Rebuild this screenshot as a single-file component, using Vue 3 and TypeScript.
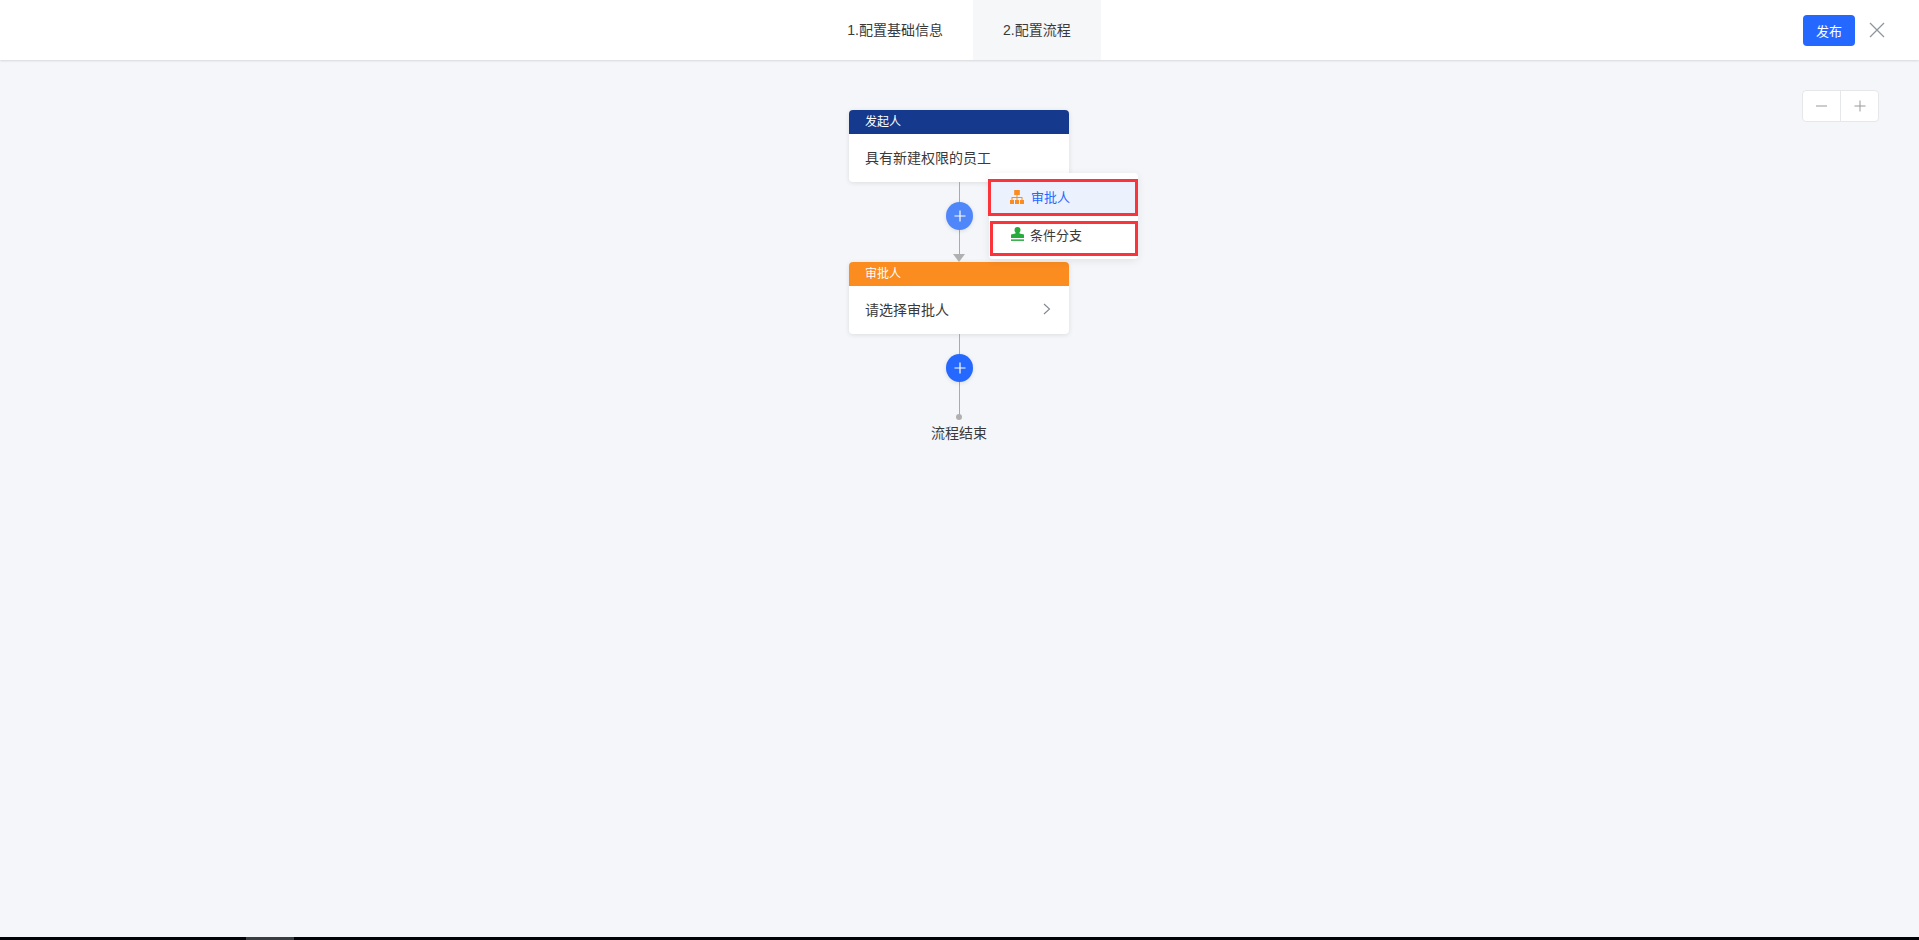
<script setup lang="ts">
const tabs = [
  { label: '1.配置基础信息', active: false },
  { label: '2.配置流程', active: true },
]
</script>

<template>
  <div class="page">
    <header class="header">
      <div></div>
      <nav class="tabs">
        <div v-for="t in tabs" :key="t.label" class="tab" :class="{ active: t.active }">{{ t.label }}</div>
      </nav>
      <div class="actions">
        <button class="publish">发布</button>
        <svg class="close" width="16" height="16" viewBox="0 0 16 16">
          <path d="M1 1 L15 15 M15 1 L1 15" stroke="#8f959e" stroke-width="1.3" fill="none" />
        </svg>
      </div>
    </header>

    <main class="canvas">
      <div class="zoom">
        <div class="zoom-btn">
          <svg width="12" height="12" viewBox="0 0 12 12"><path d="M0 6 H11" stroke="#999" stroke-width="1" /></svg>
        </div>
        <div class="zoom-btn">
          <svg width="12" height="12" viewBox="0 0 12 12"><path d="M0.5 6 H11.5 M6 0.5 V11.5" stroke="#999" stroke-width="1" /></svg>
        </div>
      </div>

      <div class="flow">
        <section class="card">
          <div class="card-title navy">发起人</div>
          <div class="card-body">具有新建权限的员工</div>
        </section>

        <div class="connector arrowed">
          <button class="add hover">
            <svg width="12" height="12" viewBox="0 0 12 12"><path d="M0.5 6 H11.5 M6 0.5 V11.5" stroke="#fff" stroke-width="1.2" /></svg>
          </button>
          <div class="menu">
            <div class="menu-item first">
              <svg width="14" height="14" viewBox="0 0 14 14" fill="#fa8c20">
                <rect x="4.2" y="0" width="5.6" height="5" />
                <rect x="0" y="10" width="4" height="4" />
                <rect x="5" y="10" width="4" height="4" />
                <rect x="10" y="10" width="4" height="4" />
                <path d="M6.5 5 H7.5 V7 H12.5 V10 H11.5 V8 H7.5 V10 H6.5 V8 H2.5 V10 H1.5 V7 H6.5 Z" />
              </svg>
              <span>审批人</span>
            </div>
            <div class="menu-item second">
              <svg width="13" height="14" viewBox="0 0 13 14" fill="#27ab3c">
                <circle cx="6.5" cy="3" r="3" />
                <path d="M4.8 5 H8.2 L8.6 6.6 L13 7.6 V11 H0 V7.6 L4.4 6.6 Z" />
                <rect x="0" y="12.4" width="13" height="1.5" />
              </svg>
              <span>条件分支</span>
            </div>
          </div>
        </div>

        <section class="card">
          <div class="card-title orange">审批人</div>
          <div class="card-body">
            <span>请选择审批人</span>
            <svg width="8" height="12" viewBox="0 0 8 12"><path d="M1 1 L6.5 6 L1 11" stroke="#808890" stroke-width="1.1" fill="none" /></svg>
          </div>
        </section>

        <div class="connector end">
          <button class="add">
            <svg width="12" height="12" viewBox="0 0 12 12"><path d="M0.5 6 H11.5 M6 0.5 V11.5" stroke="#fff" stroke-width="1.2" /></svg>
          </button>
          <span class="dot"></span>
        </div>
        <div class="end-label">流程结束</div>
      </div>
    </main>

    <footer class="strip"><span class="strip-tab"></span></footer>
  </div>
</template>

<style>
html, body { margin: 0; padding: 0; }
</style>

<style scoped>
.page {
  height: 940px;
  display: flex;
  flex-direction: column;
  background: #f5f6fa;
  font-family: "Liberation Sans", "Noto Sans CJK SC", sans-serif;
  font-size: 14px;
  color: #3a3a3a;
  overflow: hidden;
}
.header {
  flex: none;
  height: 60px;
  display: grid;
  grid-template-columns: 1fr auto 1fr;
  padding-right: 1px;
  background: #fff;
  box-shadow: 0 1px 2px rgba(0, 0, 0, 0.12);
  position: relative;
  z-index: 2;
}
.tabs { display: flex; }
.tab {
  padding: 0 30px;
  line-height: 60px;
}
.tab.active { background: #f6f7f9; }
.actions {
  display: flex;
  align-items: center;
  justify-content: flex-end;
  gap: 14px;
  padding-right: 33px;
}
.publish {
  width: 52px;
  height: 31px;
  border: 0;
  border-radius: 4px;
  background: #2468ff;
  color: #fff;
  font: inherit;
  font-size: 13px;
  padding: 0;
}
.canvas {
  flex: 1;
  min-height: 0;
  position: relative;
  padding: 50px 1px 0 0;
}
.zoom {
  position: absolute;
  top: 30px;
  right: 40px;
  display: flex;
  width: 77px;
  height: 32px;
  box-sizing: border-box;
  background: #fff;
  border: 1px solid #e6e7ea;
  border-radius: 4px;
}
.zoom-btn {
  flex: 1;
  display: flex;
  align-items: center;
  justify-content: center;
}
.zoom-btn + .zoom-btn { border-left: 1px solid #e6e7ea; }
.flow {
  width: 220px;
  margin: 0 auto;
  display: flex;
  flex-direction: column;
  align-items: center;
}
.card {
  width: 220px;
  background: #fff;
  border-radius: 4px;
  box-shadow: 0 1px 5px rgba(0, 0, 0, 0.1);
  overflow: hidden;
}
.card-title {
  height: 24px;
  line-height: 25px;
  padding-left: 16px;
  color: #fff;
  font-size: 12px;
}
.navy { background: #15398c; }
.orange { background: #fa8c20; }
.card-body {
  height: 48px;
  box-sizing: border-box;
  display: flex;
  align-items: center;
  justify-content: space-between;
  padding: 0 18px 2px 16px;
}
.connector {
  position: relative;
  width: 100%;
  height: 80px;
  display: flex;
  justify-content: center;
  padding: 20px 0 0 1px;
  box-sizing: border-box;
}
.connector::before {
  content: "";
  position: absolute;
  left: 110px;
  top: 0;
  bottom: 8px;
  width: 1px;
  background: #aaa;
}
.arrowed::after {
  content: "";
  position: absolute;
  left: 104px;
  bottom: 0;
  border-left: 6px solid transparent;
  border-right: 6px solid transparent;
  border-top: 8px solid #b0b0b0;
}
.end { height: 86px; }
.end::before { bottom: 3px; }
.add {
  position: relative;
  width: 27px;
  height: 28px;
  padding: 0;
  border: 0;
  border-radius: 50%;
  background: #2468ff;
  display: flex;
  align-items: center;
  justify-content: center;
  box-shadow: 0 1px 4px rgba(0, 0, 0, 0.12);
}
.add.hover { background: #4f86f9; }
.dot {
  position: absolute;
  left: 107px;
  bottom: 0;
  width: 6px;
  height: 6px;
  border-radius: 50%;
  background: #b0b0b0;
}
.end-label {
  margin-top: 3px;
  line-height: 20px;
}
.menu {
  position: absolute;
  left: 140px;
  top: -9px;
  width: 149px;
  height: 86px;
  box-sizing: border-box;
  background: #fff;
  border-radius: 4px;
  box-shadow: 0 2px 8px rgba(0, 0, 0, 0.08);
  font-size: 13px;
  z-index: 3;
}
.menu-item {
  position: absolute;
  box-sizing: border-box;
  border: 3px solid #fa343a;
  display: flex;
  align-items: center;
  gap: 7px;
}
.menu-item.first {
  left: -1px;
  top: 6px;
  width: 150px;
  height: 37px;
  padding: 0 0 2px 19px;
  background: #ebf2fe;
  color: #2468ff;
}
.menu-item.second {
  left: 1px;
  top: 48px;
  width: 148px;
  height: 35px;
  padding: 0 0 8px 18px;
  gap: 6px;
}
.menu-item.second svg { margin-bottom: 2px; }
.strip {
  flex: none;
  height: 3px;
  background: #01020a;
  display: flex;
  padding-left: 246px;
}
.strip-tab {
  width: 48px;
  background: #3a3d42;
}
</style>
